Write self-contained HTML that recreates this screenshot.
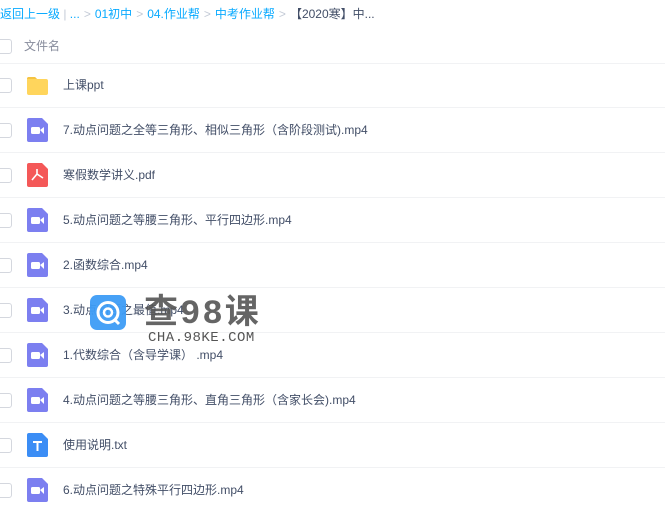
<!DOCTYPE html>
<html><head><meta charset="utf-8"><style>
body{margin:0;width:665px;height:511px;overflow:hidden;background:#fff;font-family:"Liberation Sans","Noto Sans CJK SC",sans-serif;font-size:12px;color:#424e67;position:relative}
.bc{position:absolute;top:5px;left:0;white-space:nowrap;color:#09aaff;font-size:12px}
.bc .g{color:#c3cad6;margin:0 4px}
.bc .k{color:#424e67}
.hd{position:absolute;top:30px;left:0;width:665px;height:33px;border-bottom:1px solid #f1f2f4}
.cb{position:absolute;left:-3px;width:13px;height:13px;border:1px solid #d4d7de;border-radius:3px;background:#fff}
.row{position:absolute;left:0;width:665px;height:44px;border-bottom:1px solid #f1f2f4}
.row .cb{top:15px}
.ic{position:absolute;left:27px;top:10px;width:21px;height:24px}
.nm{position:absolute;left:63px;top:13px;white-space:nowrap}
</style></head><body>
<div class="bc">返回上一级 <span style="color:#c3cad6">|</span> ...<span class="g">&gt;</span>01初中<span class="g">&gt;</span>04.作业帮<span class="g">&gt;</span>中考作业帮<span class="g">&gt;</span><span class="k">【2020寒】中...</span></div>
<div class="hd"><div class="cb" style="top:9px"></div><span style="position:absolute;left:24px;top:7px;color:#878c9c">文件名</span></div>
<div class="row" style="top:63px"><div class="cb"></div><svg class="ic" viewBox="0 0 21 24"><path d="M0 6a2 2 0 0 1 2-2h6l2 2h9a2 2 0 0 1 2 2v12a2 2 0 0 1-2 2H2a2 2 0 0 1-2-2z" fill="#ffd55c"/><path d="M0 6a2 2 0 0 1 2-2h6l2 2H0z" fill="#f5c342"/></svg><span class="nm">上课ppt</span></div>
<div class="row" style="top:108px"><div class="cb"></div><svg class="ic" viewBox="0 0 21 24"><path d="M2 0h13l6 6v16a2 2 0 0 1-2 2H2a2 2 0 0 1-2-2V2a2 2 0 0 1 2-2z" fill="#7c7ff0"/><rect x="4" y="9" width="9" height="7" rx="1.5" fill="#fff"/><path d="M13 12l4-3v7z" fill="#fff"/></svg><span class="nm">7.动点问题之全等三角形、相似三角形（含阶段测试).mp4</span></div>
<div class="row" style="top:153px"><div class="cb"></div><svg class="ic" viewBox="0 0 21 24"><path d="M2 0h13l6 6v16a2 2 0 0 1-2 2H2a2 2 0 0 1-2-2V2a2 2 0 0 1 2-2z" fill="#f45858"/><path d="M10 6v5M10 11l-5 6M10 11l6 4" stroke="#fff" stroke-width="1.6" fill="none"/></svg><span class="nm">寒假数学讲义.pdf</span></div>
<div class="row" style="top:198px"><div class="cb"></div><svg class="ic" viewBox="0 0 21 24"><path d="M2 0h13l6 6v16a2 2 0 0 1-2 2H2a2 2 0 0 1-2-2V2a2 2 0 0 1 2-2z" fill="#7c7ff0"/><rect x="4" y="9" width="9" height="7" rx="1.5" fill="#fff"/><path d="M13 12l4-3v7z" fill="#fff"/></svg><span class="nm">5.动点问题之等腰三角形、平行四边形.mp4</span></div>
<div class="row" style="top:243px"><div class="cb"></div><svg class="ic" viewBox="0 0 21 24"><path d="M2 0h13l6 6v16a2 2 0 0 1-2 2H2a2 2 0 0 1-2-2V2a2 2 0 0 1 2-2z" fill="#7c7ff0"/><rect x="4" y="9" width="9" height="7" rx="1.5" fill="#fff"/><path d="M13 12l4-3v7z" fill="#fff"/></svg><span class="nm">2.函数综合.mp4</span></div>
<div class="row" style="top:288px"><div class="cb"></div><svg class="ic" viewBox="0 0 21 24"><path d="M2 0h13l6 6v16a2 2 0 0 1-2 2H2a2 2 0 0 1-2-2V2a2 2 0 0 1 2-2z" fill="#7c7ff0"/><rect x="4" y="9" width="9" height="7" rx="1.5" fill="#fff"/><path d="M13 12l4-3v7z" fill="#fff"/></svg><span class="nm">3.动点问题之最值.mp4</span></div>
<div class="row" style="top:333px"><div class="cb"></div><svg class="ic" viewBox="0 0 21 24"><path d="M2 0h13l6 6v16a2 2 0 0 1-2 2H2a2 2 0 0 1-2-2V2a2 2 0 0 1 2-2z" fill="#7c7ff0"/><rect x="4" y="9" width="9" height="7" rx="1.5" fill="#fff"/><path d="M13 12l4-3v7z" fill="#fff"/></svg><span class="nm">1.代数综合（含导学课） .mp4</span></div>
<div class="row" style="top:378px"><div class="cb"></div><svg class="ic" viewBox="0 0 21 24"><path d="M2 0h13l6 6v16a2 2 0 0 1-2 2H2a2 2 0 0 1-2-2V2a2 2 0 0 1 2-2z" fill="#7c7ff0"/><rect x="4" y="9" width="9" height="7" rx="1.5" fill="#fff"/><path d="M13 12l4-3v7z" fill="#fff"/></svg><span class="nm">4.动点问题之等腰三角形、直角三角形（含家长会).mp4</span></div>
<div class="row" style="top:423px"><div class="cb"></div><svg class="ic" viewBox="0 0 21 24"><path d="M2 0h13l6 6v16a2 2 0 0 1-2 2H2a2 2 0 0 1-2-2V2a2 2 0 0 1 2-2z" fill="#3b8df5"/><path d="M6 9h9M10.5 9v9" stroke="#fff" stroke-width="2" fill="none"/></svg><span class="nm">使用说明.txt</span></div>
<div class="row" style="top:468px;border-bottom:none"><div class="cb"></div><svg class="ic" viewBox="0 0 21 24"><path d="M2 0h13l6 6v16a2 2 0 0 1-2 2H2a2 2 0 0 1-2-2V2a2 2 0 0 1 2-2z" fill="#7c7ff0"/><rect x="4" y="9" width="9" height="7" rx="1.5" fill="#fff"/><path d="M13 12l4-3v7z" fill="#fff"/></svg><span class="nm">6.动点问题之特殊平行四边形.mp4</span></div>
<svg style="position:absolute;left:90px;top:295px" width="36" height="35" viewBox="0 0 36 35"><rect width="36" height="35" rx="7" fill="#3d9cf5" opacity=".95"/><circle cx="18" cy="17.5" r="10" fill="none" stroke="#fff" stroke-width="3"/><circle cx="18" cy="17.5" r="4" fill="none" stroke="#fff" stroke-width="2.5"/><path d="M24 24l5 5" stroke="#fff" stroke-width="3"/></svg>
<div style="position:absolute;left:144px;top:284px;font-size:34px;font-weight:bold;color:#555;letter-spacing:2px;font-family:'Liberation Mono','Noto Sans CJK SC',monospace;opacity:.9">查98课</div>
<div style="position:absolute;left:148px;top:330px;font-size:14px;color:#555;letter-spacing:.5px;font-family:'Liberation Mono',monospace">CHA.98KE.COM</div>
</body></html>
